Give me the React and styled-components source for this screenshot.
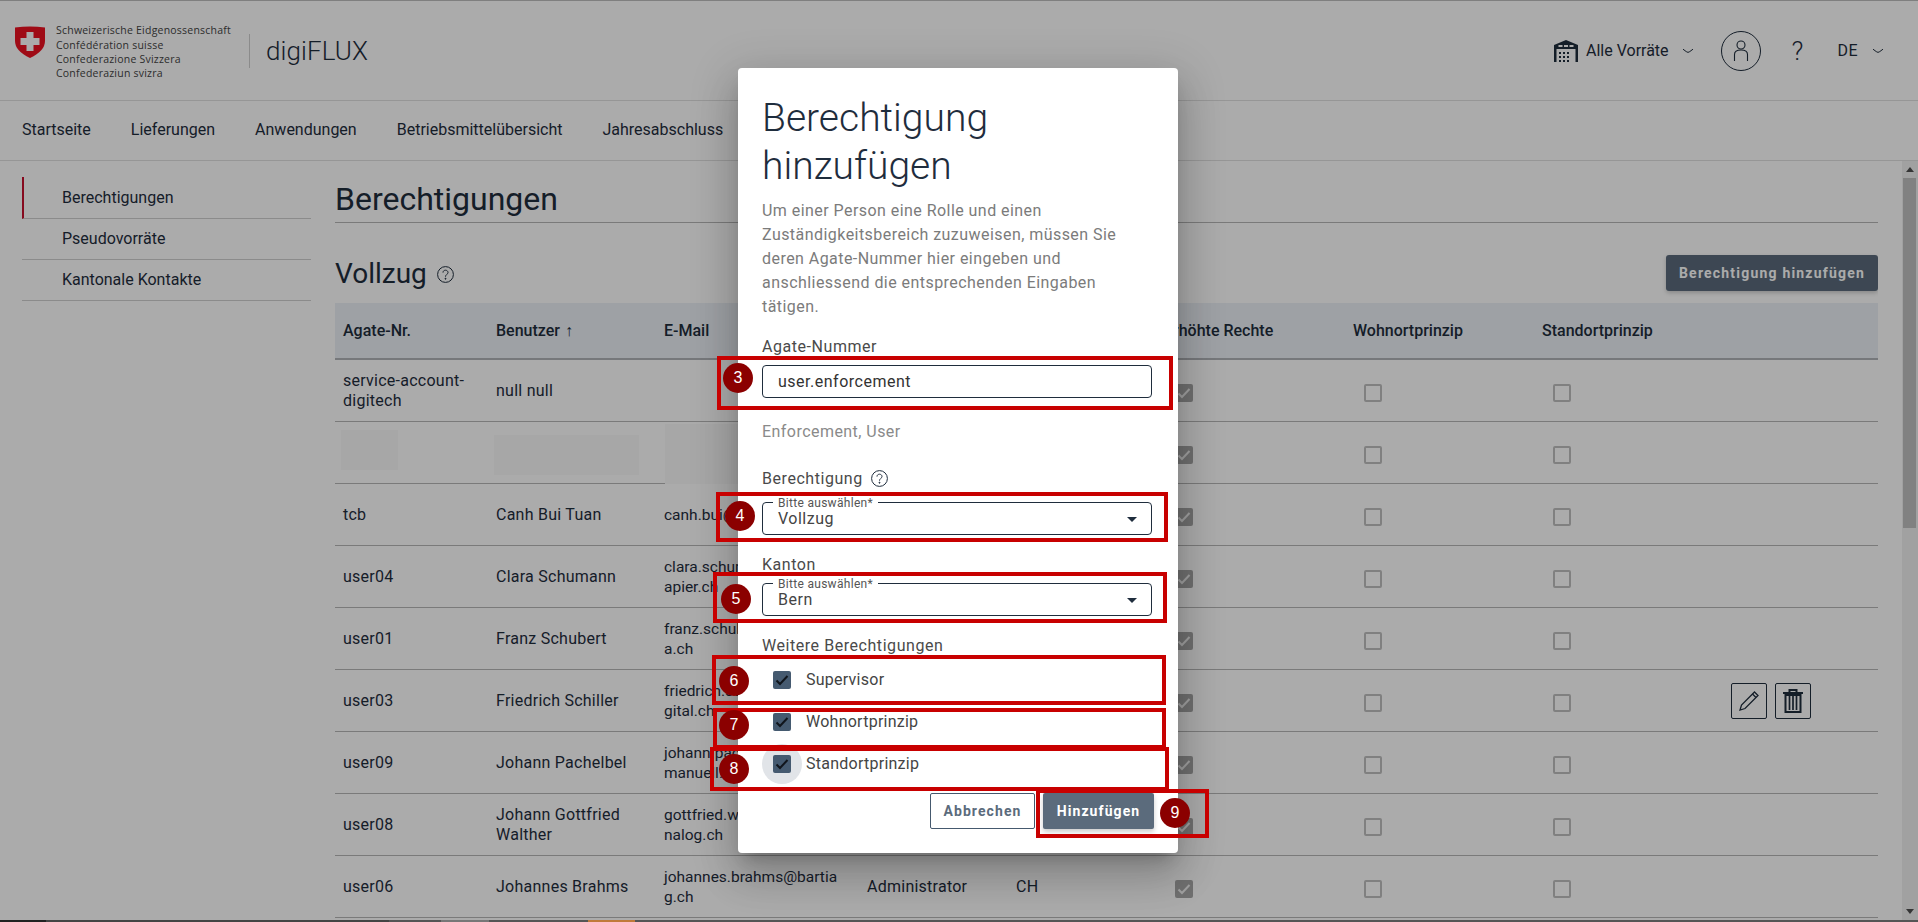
import React from 'react';
import styled, { createGlobalStyle } from 'styled-components';

const GlobalStyle = createGlobalStyle`
  html, body {
    margin: 0;
    padding: 0;
    overflow: hidden;
    background: #fff;
  }
  * { box-sizing: border-box; }
`;

const DARK = '#1f2d3d';
const FONT = `Roboto, "Liberation Sans", sans-serif`;

const rows = [
  { id: ['service-account-', 'digitech'], name: ['null null'], mail: [], role: '', scope: '' },
  { blur: true },
  { id: ['tcb'], name: ['Canh Bui Tuan'], mail: ['canh.bui@'], role: '', scope: '' },
  { id: ['user04'], name: ['Clara Schumann'], mail: ['clara.schumann@', 'apier.ch'], role: '', scope: '' },
  { id: ['user01'], name: ['Franz Schubert'], mail: ['franz.schubert@', 'a.ch'], role: '', scope: '' },
  { id: ['user03'], name: ['Friedrich Schiller'], mail: ['friedrich.schiller@', 'gital.ch'], role: '', scope: '', actions: true },
  { id: ['user09'], name: ['Johann Pachelbel'], mail: ['johann.pachelbel@', 'manuell.ch'], role: '', scope: '' },
  { id: ['user08'], name: ['Johann Gottfried', 'Walther'], mail: ['gottfried.walther@', 'nalog.ch'], role: '', scope: '' },
  { id: ['user06'], name: ['Johannes Brahms'], mail: ['johannes.brahms@bartia', 'g.ch'], role: 'Administrator', scope: 'CH' },
];

const columns = [153, 168, 203, 149, 148, 189, 189, 189, 155];
const annotations = [
  { n: 3, x: 717, y: 356, w: 456, h: 54, cx: 738, cy: 378 },
  { n: 4, x: 716, y: 492, w: 452, h: 50, cx: 740, cy: 516 },
  { n: 5, x: 713, y: 572, w: 454, h: 51, cx: 736, cy: 599 },
  { n: 6, x: 712, y: 655, w: 454, h: 50, cx: 734, cy: 681 },
  { n: 7, x: 713, y: 708, w: 453, h: 41, cx: 734, cy: 725 },
  { n: 8, x: 710, y: 747, w: 459, h: 44, cx: 734, cy: 769 },
  { n: 9, x: 1036, y: 789, w: 173, h: 49, cx: 1175, cy: 813 },
];

const Page = styled.div`
  position: relative;
  width: 1918px;
  height: 922px;
  overflow: hidden;
  display: flex;
  flex-direction: column;
  background: #fff;
  color: ${DARK};
  font-family: ${FONT};
  border-top: 1px solid #7f7f7f;
`;

const Header = styled.header`
  height: 100px;
  flex: none;
  display: flex;
  align-items: center;
  padding: 0 34px 0 15px;
  border-bottom: 1px solid #e0e0e0;
`;

const Brand = styled.div`
  display: flex;
  align-items: center;
  gap: 11px;
`;

const LogoBox = styled.div`
  display: flex;
  margin-bottom: 18px;
`;

const Confederation = styled.div`
  font-family: "Open Sans", ${FONT};
  font-size: 10.5px;
  line-height: 14.4px;
  letter-spacing: 0.22px;
  color: #444;
  width: 182px;
  white-space: nowrap;
  margin-top: 3px;
`;

const AppName = styled.div`
  padding-left: 16px;
  height: 34px;
  border-left: 1px solid #d0d0d0;
  font-size: 26px;
  font-weight: 300;
  line-height: 34px;
  letter-spacing: 0.1px;
`;

const Tools = styled.div`
  margin-left: auto;
  display: flex;
  align-items: center;
`;

const StoreLabel = styled.span`
  font-size: 16px;
  margin-left: 8px;
`;

const RoundButton = styled.div`
  width: 40px;
  height: 40px;
  border: 1px solid ${DARK};
  border-radius: 50%;
  display: flex;
  align-items: center;
  justify-content: center;
  margin-left: 27px;
`;

const Question = styled.span`
  font-size: 26px;
  font-weight: 300;
  margin-left: 31px;
`;

const Lang = styled.span`
  font-size: 16px;
  letter-spacing: 0.5px;
  margin-left: 34px;
`;

const Caret = styled.svg`
  margin-left: ${(p) => p.$gap}px;
`;

const Nav = styled.nav`
  height: 60px;
  flex: none;
  display: flex;
  align-items: center;
  gap: 40px;
  padding: 0 0 2px 22px;
  border-bottom: 1px solid #e0e0e0;
  font-size: 16px;
`;

const Body = styled.div`
  flex: 1;
  min-height: 0;
  display: flex;
`;

const Sidebar = styled.aside`
  width: 289px;
  flex: none;
  margin: 16px 24px 0 22px;
`;

const SideItem = styled.div`
  height: ${(p) => (p.$active ? 42 : 41)}px;
  line-height: ${(p) => (p.$active ? 42 : 39)}px;
  padding-left: ${(p) => (p.$active ? 38 : 40)}px;
  font-size: 16px;
  border-bottom: 1px solid #d0d0d0;
  border-left: ${(p) => (p.$active ? '2px solid #c8102e' : 'none')};
`;

const Content = styled.main`
  width: 1543px;
  flex: none;
  overflow: hidden;
`;

const PageTitle = styled.h1`
  margin: 0;
  height: 62px;
  padding-top: 17px;
  font-size: 32px;
  font-weight: 400;
  line-height: 43px;
  border-bottom: 1px solid #b6b6b6;
`;

const SectionRow = styled.div`
  height: 80px;
  display: flex;
  align-items: flex-start;
  justify-content: space-between;
`;

const SectionTitle = styled.h2`
  margin: 31px 0 0;
  display: flex;
  align-items: center;
  gap: 10px;
  font-size: 28px;
  font-weight: 400;
  line-height: 40px;
`;

const PrimaryButton = styled.button`
  margin-top: 32px;
  height: 36px;
  border: 0;
  border-radius: 3px;
  padding: 0 13px;
  background: #5b6b7c;
  color: #fff;
  font-family: ${FONT};
  font-size: 14px;
  font-weight: 700;
  letter-spacing: 1.2px;
  box-shadow: 0 2px 4px rgba(0, 0, 0, 0.2);
`;

const Table = styled.table`
  width: 1543px;
  border-collapse: collapse;
  table-layout: fixed;
  font-size: 16px;
  line-height: 20px;
  letter-spacing: 0.25px;
`;

const HeadCell = styled.th`
  height: 56px;
  padding: 0 8px;
  text-align: left;
  font-size: 16px;
  font-weight: 500;
  letter-spacing: 0;
  white-space: nowrap;
  background: #ecf1f6;
  border-bottom: 2px solid #b0b4b8;
`;

const SortArrow = styled.span`
  margin-left: 5px;
  font-weight: 300;
`;

const Row = styled.tr`
  height: 62px;
`;

const Cell = styled.td`
  position: relative;
  padding: 2px 8px 0;
  border-bottom: 1px solid #b6b6b6;
`;

const MailCell = styled(Cell)`
  font-size: 15.5px;
  letter-spacing: 0;
`;

const CheckCell = styled(Cell)`
  padding-top: 6px;
`;

const Line = styled.div`
  white-space: nowrap;
`;

const Smudge = styled.div`
  position: absolute;
  left: ${(p) => p.$left}px;
  top: ${(p) => p.$top}px;
  width: ${(p) => p.$w}px;
  height: ${(p) => p.$h}px;
  background: #fafafa;
`;

const TableCheck = styled.span`
  display: block;
  width: 18px;
  height: 18px;
  margin-left: 11px;
  border-radius: 2px;
  border: ${(p) => (p.$on ? 'none' : '2px solid #bfbfbf')};
  background: ${(p) => (p.$on ? '#a8a8a8' : 'transparent')};
  padding: 1px;
`;

const ActionGroup = styled.div`
  display: flex;
  gap: 8px;
`;

const ActionButton = styled.div`
  width: 36px;
  height: 36px;
  border: 1px solid ${DARK};
  border-radius: 2px;
  display: flex;
  align-items: center;
  justify-content: center;
`;

const Scrollbar = styled.div`
  width: 16px;
  margin-left: auto;
  flex: none;
  display: flex;
  flex-direction: column;
  background: #f1f1f1;
`;

const ScrollArrow = styled.div`
  height: 17px;
  display: flex;
  align-items: center;
  justify-content: center;
`;

const ScrollThumb = styled.div`
  height: 350px;
  margin: 0 2px 0 1px;
  background: #c1c1c1;
`;

const ScrollRest = styled.div`
  flex: 1;
`;

const Taskbar = styled.div`
  height: 2px;
  flex: none;
  display: flex;
  background: #555;
`;

const TaskSlot = styled.div`
  width: ${(p) => p.$w}px;
  background: ${(p) => p.$c};
`;

const Overlay = styled.div`
  position: absolute;
  inset: -1px 0 2px 0;
  background: rgba(0, 0, 0, 0.33);
  display: flex;
  justify-content: center;
  align-items: flex-start;
  padding: 68px 2px 0 0;
`;

const Modal = styled.div`
  width: 440px;
  height: 785px;
  background: #fff;
  border-radius: 4px;
  padding: 26px 26px 0 24px;
  display: flex;
  flex-direction: column;
  box-shadow: 0 11px 15px -7px rgba(0, 0, 0, 0.2), 0 24px 38px 3px rgba(0, 0, 0, 0.14),
    0 9px 46px 8px rgba(0, 0, 0, 0.12);
`;

const ModalTitle = styled.h2`
  margin: 0;
  font-size: 39px;
  font-weight: 300;
  line-height: 48px;
  color: ${DARK};
`;

const Intro = styled.p`
  margin: 9px 0 0;
  font-size: 16px;
  line-height: 24px;
  letter-spacing: 0.45px;
  color: #7b7b7b;
`;

const FieldLabel = styled.div`
  display: flex;
  align-items: center;
  gap: 8px;
  height: 24px;
  margin-top: ${(p) => p.$top}px;
  font-size: 16px;
  letter-spacing: 0.55px;
  color: #4a4a4a;
`;

const TextField = styled.div`
  height: 33px;
  margin-top: 7px;
  padding-left: 15px;
  border: 1px solid ${DARK};
  border-radius: 4px;
  font-size: 16px;
  line-height: 31px;
  letter-spacing: 0.5px;
  color: #333;
`;

const Hint = styled.div`
  margin-top: 22px;
  font-size: 16px;
  line-height: 24px;
  letter-spacing: 0.45px;
  color: #8a8a8a;
`;

const SelectBox = styled.div`
  position: relative;
  height: 33px;
  margin-top: ${(p) => p.$top}px;
  padding-left: 15px;
  border: 1px solid ${DARK};
  border-radius: 4px;
  font-size: 16px;
  line-height: 31px;
  letter-spacing: 0.5px;
  color: #444;
`;

const FloatLabel = styled.span`
  position: absolute;
  left: 10px;
  top: -6px;
  padding: 0 5px;
  background: #fff;
  font-size: 12px;
  line-height: 13px;
  letter-spacing: 0.3px;
  color: #555;
`;

const SelectArrow = styled.span`
  position: absolute;
  right: 14px;
  top: 14px;
  border-left: 5px solid transparent;
  border-right: 5px solid transparent;
  border-top: 5px solid ${DARK};
`;

const CheckList = styled.div`
  margin-top: 2px;
`;

const CheckRow = styled.div`
  position: relative;
  height: 42px;
  display: flex;
  align-items: center;
  padding-left: 11px;
  font-size: 16px;
  letter-spacing: 0.25px;
  color: #444;
`;

const CheckText = styled.span`
  margin-left: 15px;
  transform: translateY(-1px);
`;

const Halo = styled.span`
  position: absolute;
  left: 0;
  top: 1px;
  width: 40px;
  height: 40px;
  border-radius: 50%;
  background: #e1e4e8;
`;

const ModalCheck = styled.span`
  position: relative;
  width: 18px;
  height: 18px;
  border-radius: 2px;
  background: #455a70;
  padding: 1px;
`;

const Actions = styled.div`
  display: flex;
  justify-content: flex-end;
  gap: 8px;
  margin: 8px -2px 0 0;
`;

const OutlineButton = styled.button`
  width: 105px;
  height: 36px;
  border: 1px solid #45596e;
  border-radius: 2px;
  background: #fff;
  color: #5b6b7c;
  font-family: ${FONT};
  font-size: 14px;
  font-weight: 700;
  letter-spacing: 1.1px;
`;

const SubmitButton = styled(OutlineButton)`
  width: 111px;
  border: 0;
  background: #5b6b7c;
  color: #fff;
  box-shadow: 0 3px 5px rgba(0, 0, 0, 0.2);
`;

const Frame = styled.div`
  position: absolute;
  left: ${(p) => p.$x}px;
  top: ${(p) => p.$y}px;
  width: ${(p) => p.$w}px;
  height: ${(p) => p.$h}px;
  border: 4px solid #c80000;
`;

const Badge = styled.div`
  position: absolute;
  left: ${(p) => p.$cx - 15}px;
  top: ${(p) => p.$cy - 15}px;
  width: 30px;
  height: 30px;
  border-radius: 50%;
  background: #8b0000;
  color: #fff;
  display: flex;
  align-items: center;
  justify-content: center;
  font-family: "Liberation Sans", sans-serif;
  font-size: 16px;
`;

const SwissLogo = () => (
  <svg width="30" height="32" viewBox="0 0 30 32">
    <path d="M0 1.5 Q15 -0.5 30 1.5 V15 Q30 25 15 32 Q0 25 0 15 Z" fill="#ee1122" />
    <path d="M11.5 6h7v6h6v7h-6v6h-7v-6h-6v-7h6z" fill="#fff" />
  </svg>
);

const HelpIcon = () => (
  <svg width="17" height="17" viewBox="0 0 17 17" fill="none" stroke={DARK}>
    <circle cx="8.5" cy="8.5" r="7.9" />
    <path d="M6 6.6c0-1.5 1.1-2.4 2.5-2.4s2.5 1 2.5 2.3c0 1.9-2.5 1.9-2.5 4.2" />
    <circle cx="8.5" cy="12.7" r="0.5" fill={DARK} />
  </svg>
);

const Chevron = ({ gap }) => (
  <Caret width="12" height="6" viewBox="0 0 12 6" fill="none" stroke={DARK} $gap={gap}>
    <path d="M1 1.2 Q5 4.4 6 4.4 Q7 4.4 11 1.2" />
  </Caret>
);

const WarehouseIcon = () => (
  <svg width="24" height="22" viewBox="0 0 24 22" fill="#1f2d3d">
    <path d="M12 0 L24 5 V22 H21.5 V9 H2.5 V22 H0 V5 Z" />
    <path d="M4.5 5h4v2h-4zM10 5h4v2h-4zM15.5 5h4v2h-4z" fill="#fff" />
    <path d="M5 12h2v2H5zM9 12h2v2H9zM13 12h2v2h-2zM5 16h2v2H5zM9 16h2v2H9zM13 16h2v2h-2zM5 20h2v2H5zM9 20h2v2H9zM13 20h2v2h-2z" />
  </svg>
);

const UserIcon = () => (
  <svg width="16" height="22" viewBox="0 0 16 22" fill="none" stroke={DARK} strokeWidth="1.1">
    <circle cx="8" cy="5" r="4" />
    <path d="M1.5 21 V14.5 Q1.5 10 8 10 Q14.5 10 14.5 14.5 V21" />
  </svg>
);

const PenIcon = () => (
  <svg width="20" height="20" viewBox="0 0 20 20" fill="none" stroke={DARK} strokeWidth="1.3">
    <path d="M15.5 1 L19 4.5 L6 17.5 L1 19 L2.5 14 Z" />
    <path d="M13.5 3 L17 6.5" />
  </svg>
);

const TrashIcon = () => (
  <svg width="20" height="24" viewBox="0 0 20 24" fill="none" stroke={DARK}>
    <path d="M0 4 H20 M6.5 3.5 V1 H13.5 V3.5" strokeWidth="2" />
    <path d="M2.5 6 H17.5 V23 H2.5 Z" strokeWidth="2" />
    <path d="M6.5 7 V21 M10 7 V21 M13.5 7 V21" strokeWidth="1.7" />
  </svg>
);

const Tick = ({ color, width = 2 }) => (
  <svg width="16" height="16" viewBox="0 0 16 16" fill="none" stroke={color} strokeWidth={width}>
    <path d="M2.5 8.5 L6 12 L13.5 4" />
  </svg>
);

const App = () => {
  return (
    <Page>
      <GlobalStyle />
      <Header>
        <Brand>
          <LogoBox>
            <SwissLogo />
          </LogoBox>
          <Confederation>
            <div>Schweizerische Eidgenossenschaft</div>
            <div>Confédération suisse</div>
            <div>Confederazione Svizzera</div>
            <div>Confederaziun svizra</div>
          </Confederation>
          <AppName>digiFLUX</AppName>
        </Brand>
        <Tools>
          <WarehouseIcon />
          <StoreLabel>Alle Vorräte</StoreLabel>
          <Chevron gap={13} />
          <RoundButton>
            <UserIcon />
          </RoundButton>
          <Question>?</Question>
          <Lang>DE</Lang>
          <Chevron gap={14} />
        </Tools>
      </Header>
      <Nav>
        <span>Startseite</span>
        <span>Lieferungen</span>
        <span>Anwendungen</span>
        <span>Betriebsmittelübersicht</span>
        <span>Jahresabschluss</span>
      </Nav>
      <Body>
        <Sidebar>
          <SideItem $active>Berechtigungen</SideItem>
          <SideItem>Pseudovorräte</SideItem>
          <SideItem>Kantonale Kontakte</SideItem>
        </Sidebar>
        <Content>
          <PageTitle>Berechtigungen</PageTitle>
          <SectionRow>
            <SectionTitle>
              Vollzug <HelpIcon />
            </SectionTitle>
            <PrimaryButton>Berechtigung hinzufügen</PrimaryButton>
          </SectionRow>
          <Table>
            <colgroup>
              {columns.map((w, i) => (
                <col key={i} width={w} />
              ))}
            </colgroup>
            <thead>
              <tr>
                <HeadCell>Agate-Nr.</HeadCell>
                <HeadCell>
                  Benutzer<SortArrow>↑</SortArrow>
                </HeadCell>
                <HeadCell>E-Mail</HeadCell>
                <HeadCell>Rolle</HeadCell>
                <HeadCell>Kanton</HeadCell>
                <HeadCell>Erhöhte Rechte</HeadCell>
                <HeadCell>Wohnortprinzip</HeadCell>
                <HeadCell>Standortprinzip</HeadCell>
                <HeadCell />
              </tr>
            </thead>
            <tbody>
              {rows.map((row, i) => (
                <Row key={i}>
                  <Cell>
                    {row.blur && <Smudge $left={6} $top={8} $w={57} $h={40} />}
                    {row.id && row.id.map((t) => <Line key={t}>{t}</Line>)}
                  </Cell>
                  <Cell>
                    {row.blur && <Smudge $left={6} $top={13} $w={145} $h={40} />}
                    {row.name && row.name.map((t) => <Line key={t}>{t}</Line>)}
                  </Cell>
                  <MailCell>
                    {row.blur && <Smudge $left={9} $top={2} $w={120} $h={60} />}
                    {row.mail && row.mail.map((t) => <Line key={t}>{t}</Line>)}
                  </MailCell>
                  <Cell>{row.role}</Cell>
                  <Cell>{row.scope}</Cell>
                  <CheckCell>
                    <TableCheck $on>
                      <Tick color="#f0f0f0" />
                    </TableCheck>
                  </CheckCell>
                  <CheckCell>
                    <TableCheck />
                  </CheckCell>
                  <CheckCell>
                    <TableCheck />
                  </CheckCell>
                  <Cell>
                    {row.actions && (
                      <ActionGroup>
                        <ActionButton>
                          <PenIcon />
                        </ActionButton>
                        <ActionButton>
                          <TrashIcon />
                        </ActionButton>
                      </ActionGroup>
                    )}
                  </Cell>
                </Row>
              ))}
            </tbody>
          </Table>
        </Content>
        <Scrollbar>
          <ScrollArrow>
            <svg width="8" height="5" viewBox="0 0 8 5" fill="#505050"><path d="M4 0 L8 5 H0 Z" /></svg>
          </ScrollArrow>
          <ScrollThumb />
          <ScrollRest />
          <ScrollArrow>
            <svg width="8" height="5" viewBox="0 0 8 5" fill="#505050"><path d="M0 0 H8 L4 5 Z" /></svg>
          </ScrollArrow>
        </Scrollbar>
      </Body>
      <Taskbar>
        <TaskSlot $w={46} $c="#222" />
        <TaskSlot $w={343} $c="#444" />
        <TaskSlot $w={52} $c="#555" />
        <TaskSlot $w={48} $c="#777" />
        <TaskSlot $w={99} $c="#555" />
        <TaskSlot $w={47} $c="#c07a3a" />
      </Taskbar>
      <Overlay>
        <Modal>
          <ModalTitle>
            Berechtigung
            <br />
            hinzufügen
          </ModalTitle>
          <Intro>
            Um einer Person eine Rolle und einen Zuständigkeitsbereich zuzuweisen, müssen Sie deren
            Agate-Nummer hier eingeben und anschliessend die entsprechenden Eingaben tätigen.
          </Intro>
          <FieldLabel $top={15}>Agate-Nummer</FieldLabel>
          <TextField>user.enforcement</TextField>
          <Hint>Enforcement, User</Hint>
          <FieldLabel $top={22}>
            Berechtigung <HelpIcon />
          </FieldLabel>
          <SelectBox $top={12}>
            <FloatLabel>Bitte auswählen*</FloatLabel>
            Vollzug
            <SelectArrow />
          </SelectBox>
          <FieldLabel $top={17}>Kanton</FieldLabel>
          <SelectBox $top={7}>
            <FloatLabel>Bitte auswählen*</FloatLabel>
            Bern
            <SelectArrow />
          </SelectBox>
          <FieldLabel $top={17}>Weitere Berechtigungen</FieldLabel>
          <CheckList>
            <CheckRow>
              <ModalCheck>
                <Tick color="#10151c" />
              </ModalCheck>
              <CheckText>Supervisor</CheckText>
            </CheckRow>
            <CheckRow>
              <ModalCheck>
                <Tick color="#10151c" />
              </ModalCheck>
              <CheckText>Wohnortprinzip</CheckText>
            </CheckRow>
            <CheckRow>
              <Halo />
              <ModalCheck>
                <Tick color="#10151c" />
              </ModalCheck>
              <CheckText>Standortprinzip</CheckText>
            </CheckRow>
          </CheckList>
          <Actions>
            <OutlineButton>Abbrechen</OutlineButton>
            <SubmitButton>Hinzufügen</SubmitButton>
          </Actions>
        </Modal>
        {annotations.map((a) => (
          <React.Fragment key={a.n}>
            <Frame $x={a.x} $y={a.y} $w={a.w} $h={a.h} />
            <Badge $cx={a.cx} $cy={a.cy}>
              {a.n}
            </Badge>
          </React.Fragment>
        ))}
      </Overlay>
    </Page>
  );
};

export default App;
